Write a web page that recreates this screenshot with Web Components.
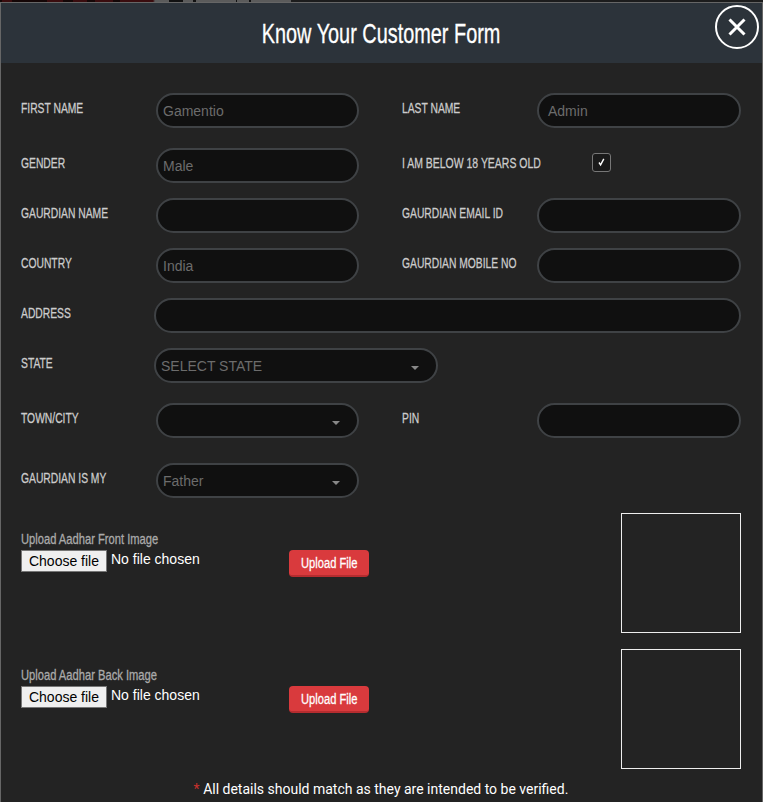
<!DOCTYPE html>
<html>
<head>
<meta charset="utf-8">
<style>
	html, body { margin: 0; padding: 0; background: #1c1c1c; height: 100%; overflow: hidden; }
</style>
</head>
<body>
<kyc-modal heading="Know Your Customer Form">
	<kyc-row top="30">
		<kyc-field label="FIRST NAME" value="Gamentio"></kyc-field>
		<kyc-field label="LAST NAME" value="Admin" second></kyc-field>
	</kyc-row>
	<kyc-row top="20">
		<kyc-field label="GENDER" value="Male"></kyc-field>
		<kyc-check label="I AM BELOW 18 YEARS OLD"></kyc-check>
	</kyc-row>
	<kyc-row top="15">
		<kyc-field label="GAURDIAN NAME"></kyc-field>
		<kyc-field label="GAURDIAN EMAIL ID" second></kyc-field>
	</kyc-row>
	<kyc-row top="15">
		<kyc-field label="COUNTRY" value="India"></kyc-field>
		<kyc-field label="GAURDIAN MOBILE NO" second></kyc-field>
	</kyc-row>
	<kyc-row top="15">
		<kyc-field label="ADDRESS" wide="587"></kyc-field>
	</kyc-row>
	<kyc-row top="15">
		<kyc-field label="STATE" value="SELECT STATE" wide="284" select></kyc-field>
	</kyc-row>
	<kyc-row top="20">
		<kyc-field label="TOWN/CITY" select></kyc-field>
		<kyc-field label="PIN" second></kyc-field>
	</kyc-row>
	<kyc-row top="25">
		<kyc-field label="GAURDIAN IS MY" value="Father" select></kyc-field>
	</kyc-row>
	<kyc-upload label="Upload Aadhar Front Image" top="15"></kyc-upload>
	<kyc-upload label="Upload Aadhar Back Image" top="16"></kyc-upload>
	<kyc-note>All details should match as they are intended to be verified.</kyc-note>
</kyc-modal>

<script>
// no condensed font here, so the heading face is Liberation Sans squeezed with scaleX
const HEAD_FONT = `"Liberation Sans", sans-serif`;
const squeeze = (amount) => `display: inline-block; white-space: nowrap; transform: scaleX(${amount}); transform-origin: left center; -webkit-text-stroke: 0.3px currentColor;`;

class KycModal extends HTMLElement {
	constructor() {
		super();
		this.attachShadow({ mode: "open" });
	}

	connectedCallback() {
		this.shadowRoot.innerHTML = `
			<style>
				:host { display: block; height: 802px; box-sizing: border-box; padding-top: 2px; }
				.strip { position: absolute; left: 0; top: 0; width: 100%; height: 2px; background: linear-gradient(90deg, #140606 0 2px, #3a0c0e 2px 12px, #140606 12px 47px, #3a0c0e 47px 63px, #140606 63px 73px, #3a0c0e 73px 87px, #140606 87px 95px, #3a0c0e 95px 113px, #140606 113px 120px, #3a0c0e 120px 153px, #5b5b5b 155px 169px, #111 169px 183px, #5b5b5b 183px 193px, #111 193px 196px, #5b5b5b 196px 236px, #111 236px 237px, #5b5b5b 237px 249px, #111 249px 251px, #5b5b5b 251px 291px, #1c1c1c 291px); }
				.dialog { width: 763px; height: 800px; background: #232323; border: 1px solid #666; border-bottom: 0; position: relative; box-sizing: border-box; }
				header { height: 60px; padding-top: 2px; box-sizing: border-box; background: #2c333a; display: flex; align-items: center; justify-content: center; color: #fff; font: 400 28px ${HEAD_FONT}; }
				header span { ${squeeze(0.71)} transform-origin: center; }
				.close { position: absolute; left: 714px; top: 2px; width: 44px; height: 44px; border: 2px solid #fff; border-radius: 50%; background: #2c333a; box-sizing: border-box; display: flex; align-items: center; justify-content: center; }
				main { padding: 0 21px 0 20px; }
			</style>
			<div class="strip"></div>
			<div class="dialog">
				<header><span>${this.getAttribute("heading")}</span></header>
				<div class="close">
					<svg width="20" height="20" viewBox="0 0 20 20"><path d="M2.5 2.5 L17.5 17.5 M17.5 2.5 L2.5 17.5" stroke="#fff" stroke-width="3" fill="none"/></svg>
				</div>
				<main><slot></slot></main>
			</div>
		`;
	}
}

class KycRow extends HTMLElement {
	constructor() {
		super();
		this.attachShadow({ mode: "open" });
	}

	connectedCallback() {
		this.shadowRoot.innerHTML = `
			<style>
				:host { display: flex; margin-top: ${this.getAttribute("top") || 0}px; }
			</style>
			<slot></slot>
		`;
	}
}

class KycField extends HTMLElement {
	constructor() {
		super();
		this.attachShadow({ mode: "open" });
	}

	connectedCallback() {
		const second = this.hasAttribute("second");
		const wide = this.getAttribute("wide");
		const isSelect = this.hasAttribute("select");
		const labelWidth = wide ? 133 : 135;
		const boxWidth = wide || (second ? 204 : 203);
		this.shadowRoot.innerHTML = `
			<style>
				:host { display: flex; margin-left: ${second ? 43 : 0}px; }
				.label { width: ${labelWidth}px; flex: none; font: 400 15.5px/29px ${HEAD_FONT}; color: #ccc; }
				.label span { ${squeeze(0.665)} }
				.box { width: ${boxWidth}px; height: 35px; box-sizing: border-box; border: 2px solid #3f4245; border-radius: 18px; background: #101010; display: flex; align-items: center; justify-content: space-between; padding: 1px 17px 0 ${second ? 9 : 5}px; font: 14px "Liberation Sans", sans-serif; color: #6c6c6c; }
				.arrow { width: 0; height: 0; border: 4px solid transparent; border-top-color: #888; border-bottom: 0; margin-top: 4px; }
			</style>
			<div class="label"><span>${this.getAttribute("label")}</span></div>
			<div class="box"><span>${this.getAttribute("value") || ""}</span>${isSelect ? `<i class="arrow"></i>` : ""}</div>
		`;
	}
}

class KycCheck extends HTMLElement {
	constructor() {
		super();
		this.attachShadow({ mode: "open" });
	}

	connectedCallback() {
		this.shadowRoot.innerHTML = `
			<style>
				:host { display: flex; margin-left: 43px; height: 35px; }
				.label { width: 190px; flex: none; font: 400 15.5px/29px ${HEAD_FONT}; color: #ccc; }
				.label span { ${squeeze(0.675)} }
				.box { width: 19px; height: 19px; margin-top: 5px; box-sizing: border-box; border: 1px solid #777; border-radius: 3px; background: #1a1a1a; display: flex; align-items: center; justify-content: center; }
			</style>
			<div class="label"><span>${this.getAttribute("label")}</span></div>
			<div class="box">
				<svg width="9" height="10" viewBox="0 0 9 10" style="margin-top:-1px"><path d="M2 5.5 L3.6 7.8 L6.8 1.8" stroke="#fff" stroke-width="1.4" fill="none"/></svg>
			</div>
		`;
	}
}

class KycUpload extends HTMLElement {
	constructor() {
		super();
		this.attachShadow({ mode: "open" });
	}

	connectedCallback() {
		this.shadowRoot.innerHTML = `
			<style>
				:host { display: flex; height: 120px; margin-top: ${this.getAttribute("top") || 0}px; justify-content: space-between; }
				.left { width: 268px; padding-top: 18px; }
				.title { font: 400 14.5px/16px ${HEAD_FONT}; color: #aaa; }
				.title span { ${squeeze(0.77)} }
				.file { display: flex; align-items: flex-start; margin-top: 3px; color: #fff; font: 14px/18px "Liberation Sans", sans-serif; }
				.choose { width: 86px; height: 22px; box-sizing: border-box; border: 1px solid #767676; background: #efefef; color: #000; font: 14px/21px "Liberation Sans", sans-serif; text-align: center; margin-right: 4px; }
				.button { margin-top: 37px; width: 80px; height: 27px; box-sizing: border-box; background: #d93a3d; border-bottom: 2px solid #b52c2f; border-radius: 4px; color: #fff; font: 400 15.5px/26px ${HEAD_FONT}; padding-left: 12px; }
				.button span { ${squeeze(0.72)} }
				.preview { width: 120px; height: 120px; box-sizing: border-box; border: 1px solid #eee; margin-left: auto; }
			</style>
			<div class="left">
				<div class="title"><span>${this.getAttribute("label")}</span></div>
				<div class="file"><div class="choose">Choose file</div><span>No file chosen</span></div>
			</div>
			<div class="button"><span>Upload File</span></div>
			<div class="preview"></div>
		`;
	}
}

class KycNote extends HTMLElement {
	constructor() {
		super();
		this.attachShadow({ mode: "open" });
	}

	connectedCallback() {
		this.shadowRoot.innerHTML = `
			<style>
				:host { display: block; text-align: center; margin-top: 11px; color: #fff; font: 14px/18px Roboto, sans-serif; }
				b { font-weight: 400; color: #c9302c; }
			</style>
			<b>*</b> <slot></slot>
		`;
	}
}

customElements.define("kyc-modal", KycModal);
customElements.define("kyc-row", KycRow);
customElements.define("kyc-field", KycField);
customElements.define("kyc-check", KycCheck);
customElements.define("kyc-upload", KycUpload);
customElements.define("kyc-note", KycNote);
</script>
</body>
</html>
